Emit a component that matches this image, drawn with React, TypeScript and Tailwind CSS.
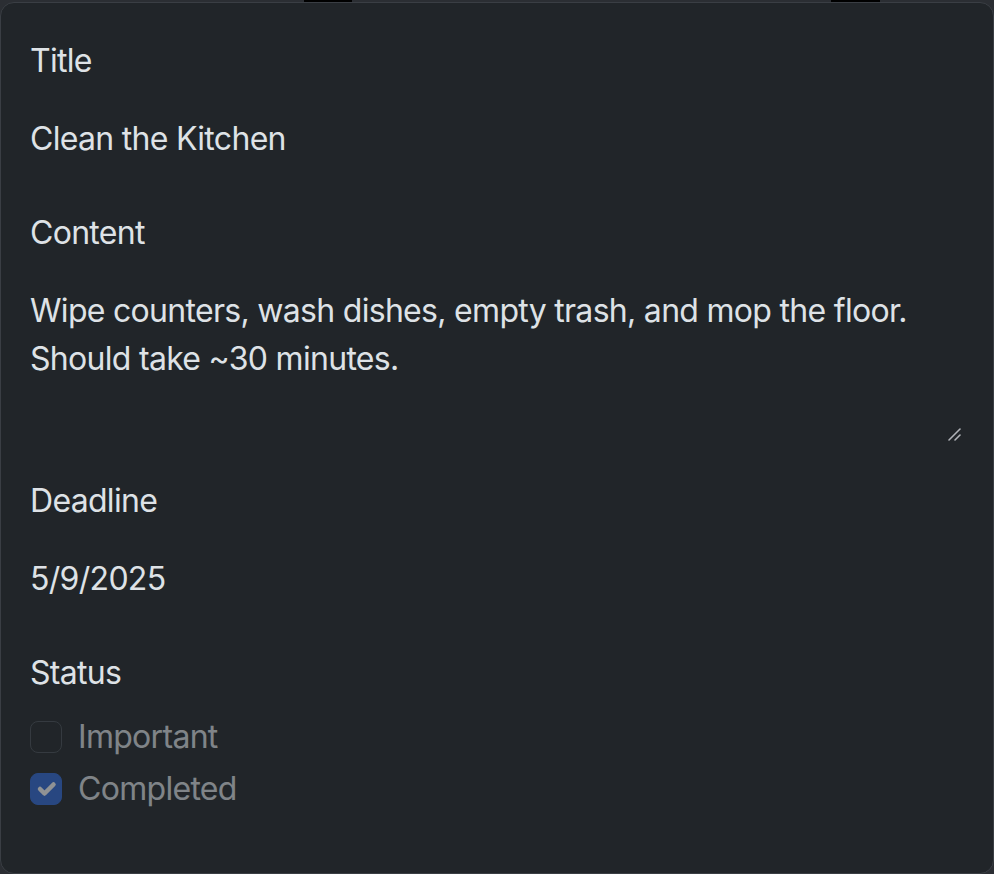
import React from "react";

const font = { fontFamily: "Inter, 'Noto Sans', sans-serif" };

function Label({ children }: { children: React.ReactNode }) {
  return <div className="text-[32px] leading-[48px] tracking-[-0.7px] mb-[16px] text-[#dee2e6]">{children}</div>;
}

function Check({ checked, label }: { checked: boolean; label: string }) {
  return (
    <div className="flex items-center h-[48px] opacity-50">
      <div
        className={
          "w-[32px] h-[32px] rounded-[8px] border flex items-center justify-center " +
          (checked ? "bg-[#2f6ad8] border-[#2f6ad8]" : "bg-[#212529] border-[#495057]")
        }
      >
        {checked && (
          <svg width="32" height="32" viewBox="0 0 20 20">
            <path d="m6 10 3 3 6-6" fill="none" stroke="#fff" strokeWidth="3" strokeLinecap="round" strokeLinejoin="round" />
          </svg>
        )}
      </div>
      <span className="ml-[16px] text-[32px] leading-[48px] tracking-[-0.7px] text-[#dee2e6]">{label}</span>
    </div>
  );
}

export default function App() {
  return (
    <div className="w-[994px] h-[874px] bg-[#2b2e33] flex flex-col overflow-hidden" style={font}>
      <div className="h-[2px] flex shrink-0">
        <div className="w-[304px]" />
        <div className="w-[48px] bg-black" />
        <div className="w-[479px]" />
        <div className="w-[49px] bg-black" />
      </div>
      <div className="flex-1 bg-[#212529] border border-[#3a3e44] rounded-[14px] pt-[34px] pl-[29px] pr-[30px] text-[#dee2e6]">
        <Label>Title</Label>
        <div className="text-[32px] leading-[48px] tracking-[-0.7px] py-[14px] mb-[32px]">Clean the Kitchen</div>

        <Label>Content</Label>
        <div className="relative mb-[32px]">
          <div className="text-[32px] leading-[48px] tracking-[-0.7px] py-[14px] h-[172px] whitespace-pre-line">
            {"Wipe counters, wash dishes, empty trash, and mop the floor.\nShould take ~30 minutes."}
          </div>
          <svg className="absolute right-[1px] bottom-[2px]" width="16" height="16" viewBox="0 0 16 16">
            <path d="M14 2 L3 13" stroke="#b0b3b8" strokeWidth="1.6" strokeLinecap="round" />
            <path d="M14 8 L9 13" stroke="#b0b3b8" strokeWidth="1.6" strokeLinecap="round" />
          </svg>
        </div>

        <Label>Deadline</Label>
        <div className="text-[32px] leading-[48px] tracking-[-0.7px] py-[14px] mb-[32px]">5/9/2025</div>

        <Label>Status</Label>
        <div className="flex flex-col gap-[4px]">
          <Check checked={false} label="Important" />
          <Check checked={true} label="Completed" />
        </div>
      </div>
    </div>
  );
}
